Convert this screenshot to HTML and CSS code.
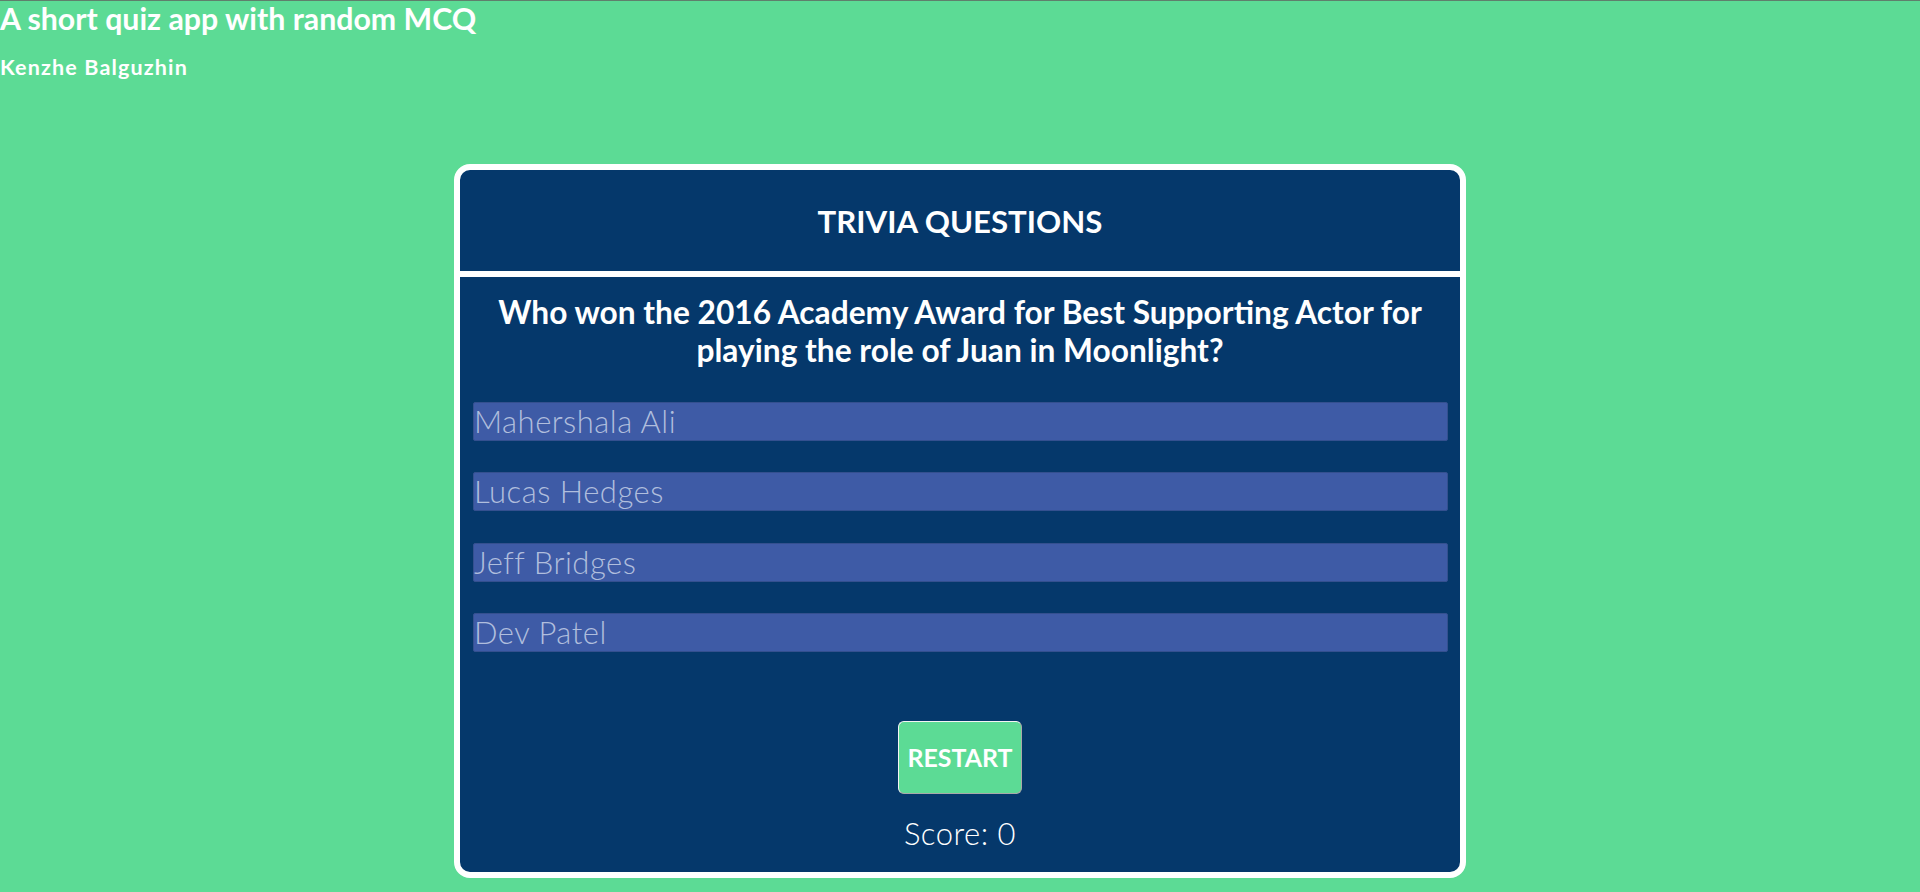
FILE: index.html
```html
<!DOCTYPE html>
<html lang="en">
<head>
<meta charset="utf-8">
<title>Quiz App</title>
<link rel="stylesheet" href="styles.css">
</head>
<body>
<header class="intro">
  <h1 class="intro-title">A short quiz app with random MCQ</h1>
  <h3 class="intro-author">Kenzhe Balguzhin</h3>
</header>
<main class="card">
  <div class="card-head">
    <h2 class="card-title">TRIVIA QUESTIONS</h2>
  </div>
  <section class="card-body">
    <h2 class="question">Who won the 2016 Academy Award for Best Supporting Actor for playing the role of Juan in Moonlight?</h2>
    <div class="answers">
      <button class="answer">Mahershala Ali</button>
      <button class="answer">Lucas Hedges</button>
      <button class="answer">Jeff Bridges</button>
      <button class="answer">Dev Patel</button>
    </div>
    <button class="restart">RESTART</button>
    <p class="score">Score: 0</p>
  </section>
</main>
</body>
</html>
```

FILE: styles.css
```css
* { box-sizing: border-box; }
html, body { margin: 0; padding: 0; }
body {
  background: #5cdb95;
  border-top: 1px solid #5f7f6c;
  font-family: "Lato", "Liberation Sans", sans-serif;
  color: #ffffff;
  height: 892px;
  overflow: hidden;
}
.intro-title {
  margin: 0;
  font-size: 30.3px;
  line-height: 34px;
  font-weight: 700;
}
.intro-author {
  margin: 20px 0 0;
  font-size: 21.5px;
  line-height: 24px;
  letter-spacing: 1.15px;
  font-weight: 700;
}
.card {
  box-sizing: content-box;
  width: 1000px;
  margin: 85px auto 0;
  border: 6px solid #ffffff;
  border-radius: 16px;
  background: #05386b;
  overflow: hidden;
}
.card-head {
  height: 107px;
  border-bottom: 6px solid #ffffff;
  display: flex;
  align-items: center;
  justify-content: center;
}
.card-title {
  margin: 0;
  font-size: 31.2px;
  line-height: 38px;
  font-weight: 700;
}
.card-body {
  padding: 16px 0 19.6px;
  display: flex;
  flex-direction: column;
  align-items: center;
}
.question {
  margin: 0;
  padding: 0 20px;
  text-align: center;
  font-size: 31.7px;
  line-height: 38px;
  font-weight: 700;
}
.answers {
  align-self: stretch;
  margin: 33px 12px 0 13px;
  display: flex;
  flex-direction: column;
  gap: 31.3px;
}
.answer {
  height: 39px;
  padding: 0;
  border: 1px solid #34508f;
  border-radius: 2px;
  background: #3e5ba6;
  color: #b0bedd;
  font-family: inherit;
  font-size: 31px;
  line-height: 37px;
  letter-spacing: 0.5px;
  font-weight: 300;
  text-align: left;
}
.restart {
  margin-top: 69px;
  height: 73px;
  padding: 0 9px;
  border: 1px solid;
  border-color: #f4f4f4 #a9a9a9 #a9a9a9 #f4f4f4;
  border-radius: 6px;
  background: #5cdb95;
  color: #ffffff;
  font-family: inherit;
  font-size: 24.9px;
  font-weight: 700;
}
.score {
  margin: 20.5px 0 0;
  font-size: 31px;
  line-height: 38px;
  letter-spacing: 0.5px;
  font-weight: 300;
}
```
